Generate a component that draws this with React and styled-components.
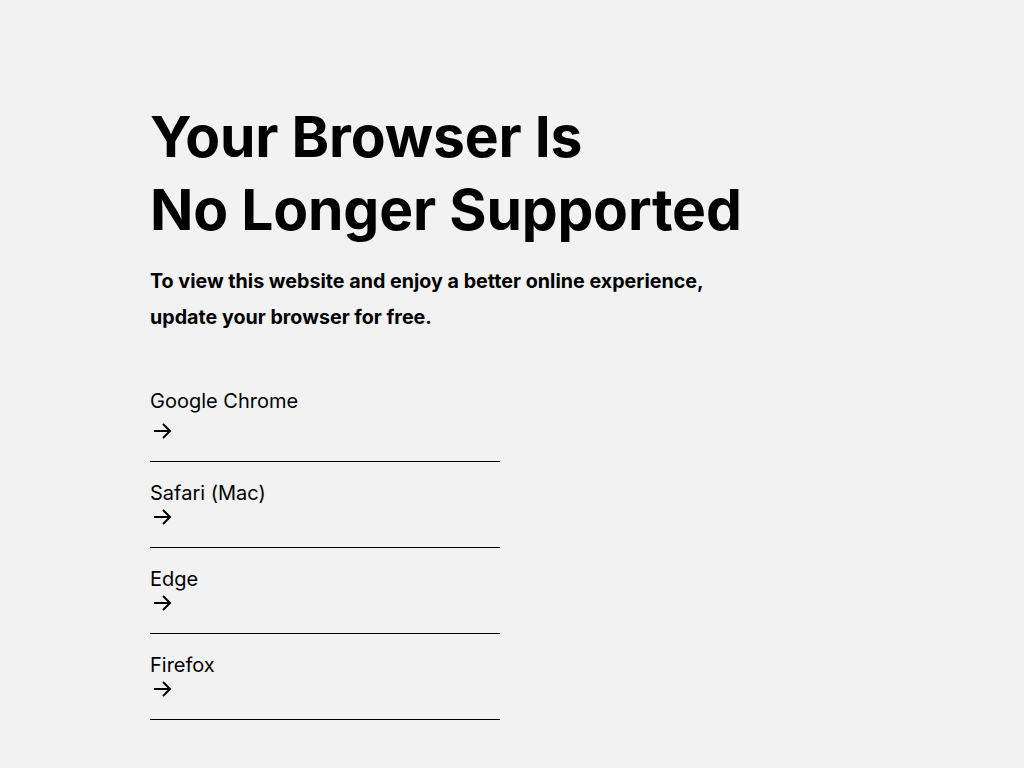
import styled, { createGlobalStyle } from 'styled-components'

const Global = createGlobalStyle`
  html, body {
    margin: 0;
    padding: 0;
    background: #f2f2f2;
    color: #000;
    font-family: Inter, "Noto Sans", sans-serif;
  }
`

const Page = styled.main`
  min-height: 100vh;
  padding: 100px 150px 0;
  box-sizing: border-box;
`

const Title = styled.h1`
  margin: 0;
  font-size: 57px;
  line-height: 73px;
  font-weight: 700;
  letter-spacing: -0.2px;
`

const Lead = styled.p`
  margin: 17px 0 0;
  font-size: 19.7px;
  line-height: 36px;
  font-weight: 700;
  max-width: 580px;
`

const List = styled.ul`
  list-style: none;
  margin: 54px 0 0;
  padding: 0;
  width: 350px;
`

const Item = styled.li`
  border-bottom: 1px solid #000;
  padding: ${p => (p.first ? '0 0 18px' : '19px 0 18px')};
`

const Link = styled.a`
  display: flex;
  flex-direction: column;
  gap: ${p => (p.first ? '6px' : '0')};
  color: #000;
  text-decoration: none;
`

const Name = styled.span`
  font-size: 20px;
  line-height: 24px;
  font-weight: 400;
`

const Arrow = styled.span`
  display: flex;
  align-items: center;
  height: 24px;
  padding-left: 3px;
`

const ArrowIcon = () => (
  <svg width="19" height="16" viewBox="0 0 19 16" fill="none" stroke="#000" strokeWidth="2">
    <path d="M1 8h16M10 1l7 7-7 7" />
  </svg>
)

const browsers = ['Google Chrome', 'Safari (Mac)', 'Edge', 'Firefox']

export default function App() {
  return (
    <Page>
      <Global />
      <Title>
        Your Browser Is
        <br />
        No Longer Supported
      </Title>
      <Lead>
        To view this website and enjoy a better online experience, update your browser for free.
      </Lead>
      <List>
        {browsers.map((name, i) => (
          <Item key={name} first={i === 0}>
            <Link href="#" first={i === 0}>
              <Name>{name}</Name>
              <Arrow>
                <ArrowIcon />
              </Arrow>
            </Link>
          </Item>
        ))}
      </List>
    </Page>
  )
}
